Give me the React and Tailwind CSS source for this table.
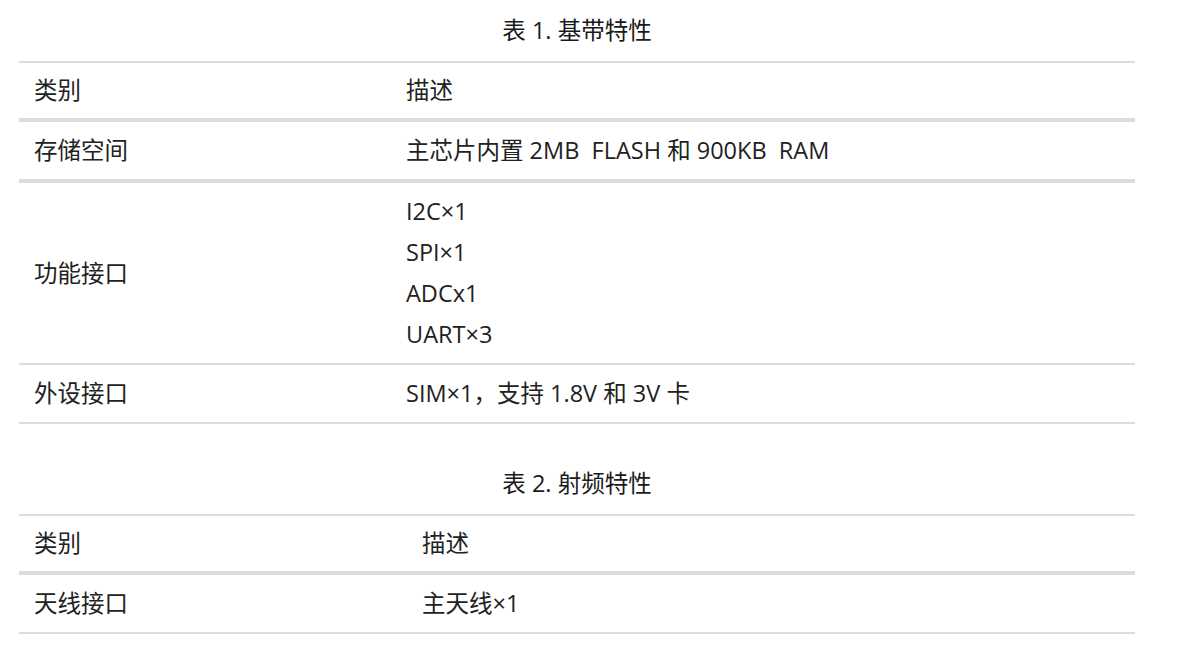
const tables = [
  {
    caption: "表 1. 基带特性",
    col: "w-[372px]",
    rows: [
      { name: "存储空间", desc: ["主芯片内置 2MB\u00a0 FLASH 和 900KB\u00a0 RAM"], line: "border-b-4" },
      { name: "功能接口", desc: ["I2C×1", "SPI×1", "ADCx1", "UART×3"], line: "border-b-2" },
      { name: "外设接口", desc: ["SIM×1，支持 1.8V 和 3V 卡"], line: "border-b-2" },
    ],
  },
  {
    caption: "表 2. 射频特性",
    col: "w-[388px]",
    rows: [{ name: "天线接口", desc: ["主天线×1"], line: "border-b-2" }],
  },
];

function SpecTable({ caption, col, rows, first }) {
  return (
    <div className={first ? "" : "mt-[29px]"}>
      <div className="h-[61px] flex items-center justify-center text-[#1a1a1a]">
        {caption}
      </div>
      <table className="w-full border-collapse table-fixed">
        <thead>
          <tr className="border-t-2 border-b-4 border-[#dcdcdc]">
            <td className={`${col} px-[15px] py-[7px] leading-[41px] align-middle`}>类别</td>
            <td className="px-[15px] py-[7px] leading-[41px]">描述</td>
          </tr>
        </thead>
        <tbody>
          {rows.map((r) => (
            <tr key={r.name} className={`${r.line} border-[#dcdcdc]`}>
              <td className="px-[15px] py-[8px] leading-[41px] align-middle">{r.name}</td>
              <td className="px-[15px] py-[8px] leading-[41px] align-middle">
                {r.desc.map((d) => (
                  <div key={d}>{d}</div>
                ))}
              </td>
            </tr>
          ))}
        </tbody>
      </table>
    </div>
  );
}

export default function App() {
  return (
    <div
      className="min-h-screen bg-white text-[#222] text-[23.5px]"
      style={{ fontFamily: '"Open Sans", "Noto Sans CJK SC", sans-serif' }}
    >
      <div className="ml-[19px] w-[1116px]">
        {tables.map((t, i) => (
          <SpecTable key={t.caption} {...t} first={i === 0} />
        ))}
      </div>
    </div>
  );
}
